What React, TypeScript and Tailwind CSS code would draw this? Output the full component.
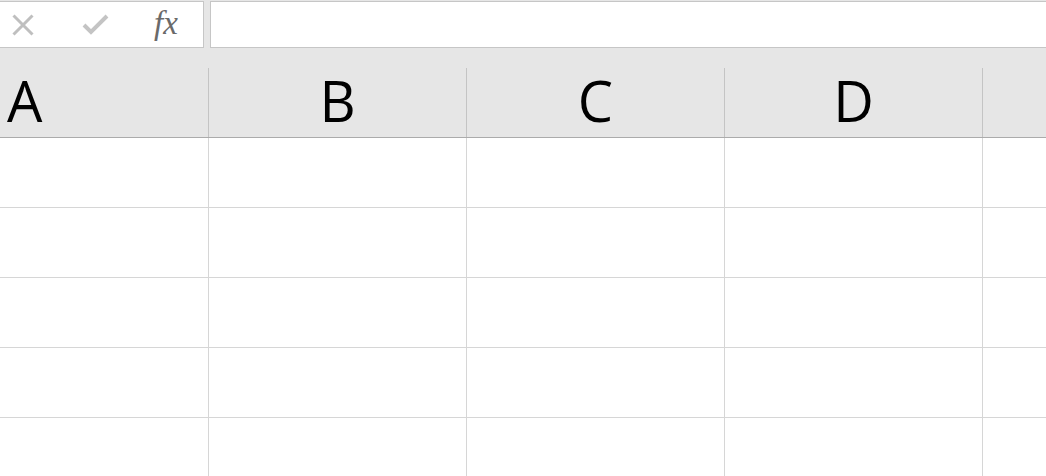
import React from 'react';

const columns = [
    { label: 'A', width: 'w-[208px]', align: 'justify-start pl-[7px]' },
    { label: 'B', width: 'w-[257px]', align: 'justify-center' },
    { label: 'C', width: 'w-[257px]', align: 'justify-center' },
    { label: 'D', width: 'w-[257px]', align: 'justify-center' },
];

const rows = [0, 1, 2, 3, 4];

const FormulaBar: React.FC = () => (
    <div className="flex h-[48px] bg-[#e6e6e6] pt-px">
        <div className="flex w-[204px] items-center border-t border-r border-b border-[#c6c6c6] bg-white">
            <svg width="24" height="22" viewBox="0 0 24 22" className="ml-[11px]">
                <path d="M2.5 1.5 L21.5 20.5 M21.5 1.5 L2.5 20.5" stroke="#bfbfbf" strokeWidth="3" fill="none" />
            </svg>
            <svg width="28" height="22" viewBox="0 0 28 22" className="ml-[47px]">
                <path d="M2 11 L9 18 L25 2" stroke="#c4c4c4" strokeWidth="4" fill="none" strokeLinejoin="miter" />
            </svg>
            <span className="mb-[2px] ml-[44px] font-['Liberation_Serif',serif] text-[33px] italic leading-none text-[#6a6a6a]">
                fx
            </span>
        </div>
        <div className="w-[6px]" />
        <div className="flex-1 border-t border-b border-l border-[#c6c6c6] bg-white" />
    </div>
);

const App: React.FC = () => {
    return (
        <div className="h-[476px] w-[1046px] overflow-hidden bg-white font-['Open_Sans',sans-serif]">
            <FormulaBar />

            <div className="flex h-[90px] border-b border-[#ababab] bg-[#e6e6e6]">
                {columns.map((col) => (
                    <div key={col.label} className="flex">
                        <div className={`flex ${col.width} ${col.align} items-start pt-[24px]`}>
                            <span className="text-[56px] leading-none text-black">{col.label}</span>
                        </div>
                        <div className="h-[69px] w-px self-end bg-[#c4c4c4]" />
                    </div>
                ))}
                <div className="flex-1" />
            </div>

            {rows.map((r) => (
                <div key={r} className="flex h-[70px] border-b border-[#d6d6d6]">
                    {columns.map((col) => (
                        <div key={col.label} className={`${col.width} box-content border-r border-[#d6d6d6]`} />
                    ))}
                    <div className="flex-1" />
                </div>
            ))}
        </div>
    );
};

export default App;
